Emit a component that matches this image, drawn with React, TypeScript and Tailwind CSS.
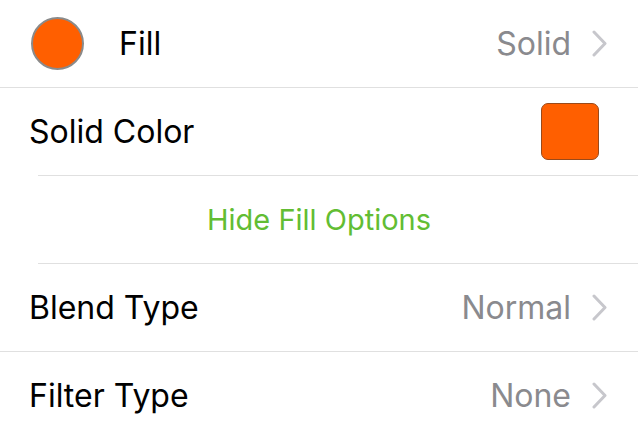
import React from "react";

const Chevron = () => (
  <svg width="15" height="27" viewBox="0 0 15 27" className="shrink-0">
    <polyline points="2,2 13,13.5 2,25" fill="none" stroke="#c7c7cc" strokeWidth="3" strokeLinecap="round" strokeLinejoin="round" />
  </svg>
);

const font = { fontFamily: "Inter, 'Liberation Sans', sans-serif" };

export default function App() {
  return (
    <div className="w-[638px] h-[439px] bg-white overflow-hidden" style={font}>
      <div className="h-[88px] flex items-center border-b border-[#e0e0e0] pl-[31px] pr-[31px]">
        <div className="w-[53px] h-[53px] rounded-full bg-[#ff5f00] border-2 border-[#8a8a8a] shrink-0" />
        <span className="ml-[35px] text-[32px] text-black flex-1">Fill</span>
        <span className="text-[32px] text-[#8a8a8e] mr-[21px]">Solid</span>
        <Chevron />
      </div>
      <div className="h-[87px] flex items-center pl-[29px] pr-[39px]">
        <span className="text-[32px] text-black flex-1">Solid Color</span>
        <div className="w-[58px] h-[57px] rounded-[7px] bg-[#ff5f00] border border-[#9a4a1a]" />
      </div>
      <div className="ml-[38px] border-b border-[#e0e0e0]" />
      <div className="h-[87px] flex items-center justify-center">
        <span className="text-[29px] text-[#62bd33]">Hide Fill Options</span>
      </div>
      <div className="ml-[38px] border-b border-[#e0e0e0]" />
      <div className="h-[88px] flex items-center border-b border-[#e0e0e0] pl-[29px] pr-[31px]">
        <span className="text-[32px] text-black flex-1">Blend Type</span>
        <span className="text-[32px] text-[#8a8a8e] mr-[21px]">Normal</span>
        <Chevron />
      </div>
      <div className="h-[87px] flex items-center pl-[29px] pr-[31px]">
        <span className="text-[32px] text-black flex-1">Filter Type</span>
        <span className="text-[32px] text-[#8a8a8e] mr-[21px]">None</span>
        <Chevron />
      </div>
    </div>
  );
}
